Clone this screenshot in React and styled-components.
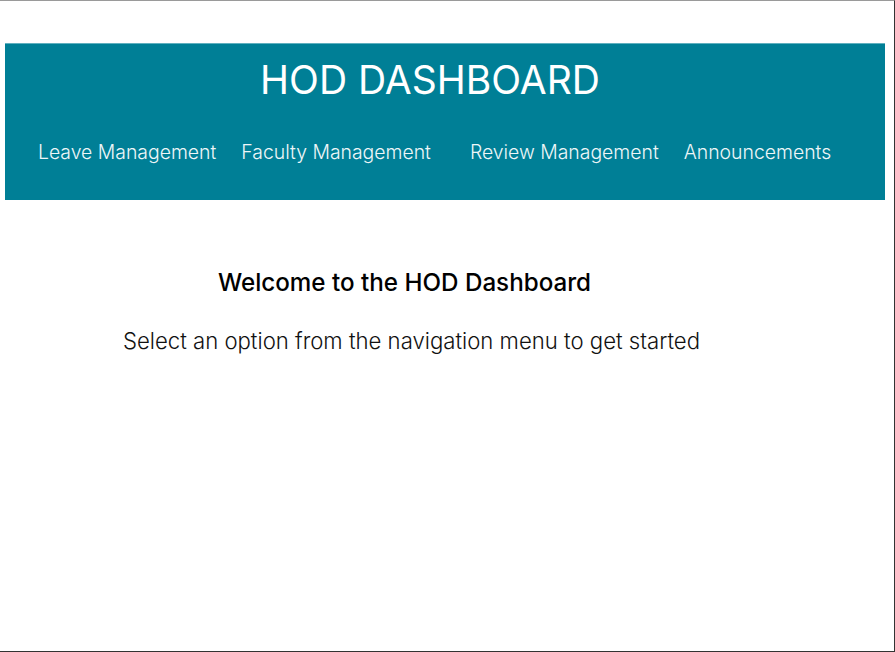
import styled, { createGlobalStyle } from "styled-components"

const GlobalStyle = createGlobalStyle`
  html, body {
    margin: 0;
    padding: 0;
    background: #ffffff;
    font-family: Inter, "Noto Sans", sans-serif;
  }
`

const Page = styled.div`
  box-sizing: border-box;
  width: 100vw;
  height: 100vh;
  border-top: 1px solid #9a9a9a;
  border-right: 1px solid #333333;
  border-bottom: 1px solid #333333;
  padding-top: 42px;
`

const Header = styled.header`
  box-sizing: border-box;
  margin: 0 9px 0 5px;
  height: 157px;
  background-color: #007f96;
  border-top: 1px solid #5fb0bf;
  color: #ffffff;
  display: flex;
  flex-direction: column;
`

const Title = styled.h1`
  margin: 0;
  padding: 13px 30px 0 0;
  text-align: center;
  font-size: 39px;
  font-weight: 400;
  line-height: 46px;
`

const Nav = styled.nav`
  display: flex;
  align-items: center;
  gap: 25px;
  padding: 37px 0 0 33px;
`

const NavLink = styled.a`
  margin-left: ${(p) => (p.$extra ? `${p.$extra}px` : "0")};
  color: #eef6f8;
  font-size: 19.4px;
  font-weight: 300;
  line-height: 24px;
  text-decoration: none;
  cursor: pointer;
`

const Main = styled.main`
  display: flex;
  flex-direction: column;
  align-items: center;
  padding: 68px 79px 0 0;
`

const Welcome = styled.h2`
  margin: 0 6px 0 0;
  font-size: 24.2px;
  font-weight: 500;
  line-height: 30px;
  color: #000000;
`

const Hint = styled.p`
  margin: 29px 0 0 8px;
  font-size: 22.15px;
  font-weight: 300;
  line-height: 28px;
  color: #111111;
`

const links = [
  { label: "Leave Management" },
  { label: "Faculty Management" },
  { label: "Review Management", extra: 14 },
  { label: "Announcements" },
]

export default function App() {
  return (
    <Page>
      <GlobalStyle />
      <Header>
        <Title>HOD DASHBOARD</Title>
        <Nav>
          {links.map((l) => (
            <NavLink key={l.label} $extra={l.extra}>
              {l.label}
            </NavLink>
          ))}
        </Nav>
      </Header>
      <Main>
        <Welcome>Welcome to the HOD Dashboard</Welcome>
        <Hint>Select an option from the navigation menu to get started</Hint>
      </Main>
    </Page>
  )
}
